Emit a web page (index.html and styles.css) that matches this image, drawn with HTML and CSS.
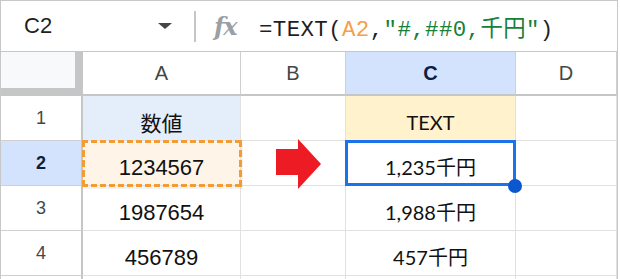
FILE: index.html
```html
<!DOCTYPE html>
<html lang="ja">
<head>
<meta charset="utf-8">
<title>TEXT関数</title>
<link rel="stylesheet" href="styles.css">
</head>
<body>
<div class="sheet">
  <div class="fbar">
    <div class="namebox"><span class="ref">C2</span><span class="caret"></span></div>
    <div class="sep"></div>
    <div class="fx">fx</div>
    <div class="formula">=TEXT(<span class="f-ref">A2</span>,<span class="f-str">"#,##0,千円"</span>)</div>
  </div>
  <div class="grid">
    <div class="corner"></div>
    <div class="colh">A</div>
    <div class="colh">B</div>
    <div class="colh colh-sel">C</div>
    <div class="colh">D</div>

    <div class="rowh">1</div>
    <div class="cell cell-blue jp">数値</div>
    <div class="cell"></div>
    <div class="cell cell-yellow cal">TEXT</div>
    <div class="cell"></div>

    <div class="rowh rowh-sel">2</div>
    <div class="cell cell-copy">1234567</div>
    <div class="cell"></div>
    <div class="cell cell-active cal">1,235千円</div>
    <div class="cell"></div>

    <div class="rowh">3</div>
    <div class="cell">1987654</div>
    <div class="cell"></div>
    <div class="cell cal">1,988千円</div>
    <div class="cell"></div>

    <div class="rowh">4</div>
    <div class="cell">456789</div>
    <div class="cell"></div>
    <div class="cell cal">457千円</div>
    <div class="cell"></div>

    <div class="rowh"></div>
    <div class="cell"></div>
    <div class="cell"></div>
    <div class="cell"></div>
    <div class="cell"></div>
  </div>
  <svg class="arrow" width="46" height="51" viewBox="0 0 46 51"><polygon points="0,10 22,10 22,0 45,25 22,50 22,36 0,36" fill="#ed1c24"/></svg>
</div>
</body>
</html>
```
FILE: styles.css
```css
html, body {
  margin: 0;
  padding: 0;
  background: #ffffff;
  overflow: hidden;
}
body {
  width: 620px;
  height: 279px;
  font-family: "Liberation Sans", Arial, sans-serif;
  color: #1f1f1f;
}
.sheet {
  position: relative;
  width: 618px;
  border: 1px solid #c8c8c8;
  border-bottom: none;
  box-sizing: border-box;
}
.fbar {
  display: flex;
  align-items: center;
  height: 51px;
  box-sizing: border-box;
  border-bottom: 1px solid #c7c7c7;
}
.namebox {
  display: flex;
  align-items: center;
  width: 193px;
  padding-left: 23px;
  box-sizing: border-box;
}
.ref {
  font-size: 22px;
  color: #1f1f1f;
  width: 134px;
}
.caret {
  width: 0;
  height: 0;
  border-left: 7px solid transparent;
  border-right: 7px solid transparent;
  border-top: 6px solid #444746;
}
.sep {
  width: 2px;
  height: 31px;
  background: #c4c7c5;
}
.fx {
  margin-left: 18px;
  width: 45px;
  font-family: "DejaVu Serif", serif;
  font-style: italic;
  font-weight: bold;
  font-size: 24px;
  color: #9aa0a6;
  letter-spacing: -1px;
}
.formula {
  font-family: "Liberation Mono", "Noto Sans CJK JP", monospace;
  font-size: 22.4px;
  letter-spacing: 0.4px;
  color: #1f1f1f;
  white-space: nowrap;
}
.f-ref { color: #f4a04a; }
.f-str { color: #188038; }

.grid {
  display: grid;
  grid-template-columns: 82px 158px 105px 170px 101px;
  grid-template-rows: 44px 45px 45px 45px 45px 4px;
}
.corner {
  background: #f8f9fa;
  border-right: 8px solid #c4c7c5;
  border-bottom: 8px solid #c4c7c5;
}
.colh {
  display: flex;
  align-items: center;
  justify-content: center;
  font-size: 20px;
  color: #444746;
  background: #ffffff;
  border-right: 1px solid #cfcfcf;
  border-bottom: 2px solid #c4c7c5;
}
.colh-sel {
  background: #d3e3fd;
  color: #0b1f44;
  font-weight: bold;
}
.rowh {
  display: flex;
  align-items: center;
  justify-content: center;
  font-size: 18px;
  color: #444746;
  background: #ffffff;
  border-right: 2px solid #c4c7c5;
  border-bottom: 1px solid #cfcfcf;
}
.rowh-sel {
  background: #d3e3fd;
  color: #0b1f44;
  font-weight: bold;
}
.cell {
  display: flex;
  align-items: flex-end;
  justify-content: center;
  padding-bottom: 5px;
  font-size: 22px;
  line-height: 25px;
  color: #111111;
  border-right: 1px solid #e1e1e1;
  border-bottom: 1px solid #e1e1e1;
  white-space: nowrap;
}
.jp {
  font-family: "Noto Sans CJK JP", sans-serif;
  font-size: 21px;
}
.cal {
  font-family: Lato, "Noto Sans CJK JP", sans-serif;
  font-size: 20px;
}
.cell-blue { background: #e4eefb; }
.cell-yellow { background: #fff2cc; }
.cell-copy {
  position: relative;
  background: #fef4e8;
  box-shadow: 2px 3px 0 rgba(0, 0, 0, 0.05);
}
.cell-copy::after {
  content: "";
  position: absolute;
  left: -1px;
  top: -1px;
  right: -2px;
  bottom: -2px;
  background:
    repeating-linear-gradient(90deg, #f39c34 0 6px, transparent 6px 9px) top left / 100% 3px no-repeat,
    repeating-linear-gradient(90deg, #f39c34 0 6px, transparent 6px 9px) bottom left / 100% 3px no-repeat,
    repeating-linear-gradient(180deg, #f39c34 0 7px, transparent 7px 10px) top left / 3px 100% no-repeat,
    repeating-linear-gradient(180deg, #f39c34 0 7px, transparent 7px 10px) top right / 3px 100% no-repeat;
}
.cell-active {
  position: relative;
}
.cell-active::after {
  content: "";
  position: absolute;
  left: -1px;
  top: -1px;
  width: 171px;
  height: 46px;
  box-sizing: border-box;
  border: 3px solid #1a73e8;
}
.cell-active::before {
  content: "";
  position: absolute;
  left: 162px;
  top: 38px;
  width: 14px;
  height: 14px;
  border-radius: 50%;
  background: #0b57d0;
  z-index: 2;
}
.arrow {
  position: absolute;
  left: 275px;
  top: 138px;
}
```
